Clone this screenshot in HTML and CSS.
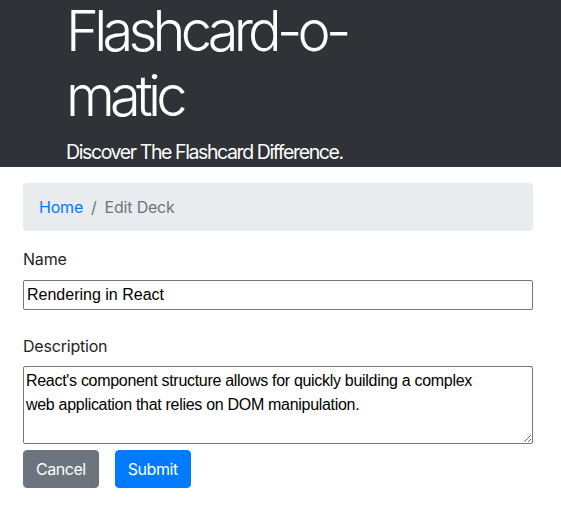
FILE: index.html
```html
<!DOCTYPE html>
<html>
<head>
<meta charset="utf-8">
<link rel="stylesheet" href="styles.css">
</head>
<body>
<header class="jumbo">
  <div class="jumbo-inner">
    <h1 class="title">Flashcard-o-matic</h1>
    <p class="lead">Discover The Flashcard Difference.</p>
  </div>
</header>
<main class="container">
  <nav class="breadcrumb">
    <a class="crumb-link" href="#">Home</a>
    <span class="crumb-sep">/</span>
    <span class="crumb-current">Edit Deck</span>
  </nav>
  <form class="deck-form">
    <div class="field">
      <label class="label" for="name">Name</label>
      <input class="input" id="name" type="text" value="Rendering in React">
    </div>
    <div class="field field-desc">
      <label class="label" for="desc">Description</label>
      <textarea class="textarea" id="desc">React's component structure allows for quickly building a complex web application that relies on DOM manipulation.</textarea>
    </div>
    <div class="actions">
      <button type="button" class="btn btn-secondary">Cancel</button>
      <button type="submit" class="btn btn-primary">Submit</button>
    </div>
  </form>
</main>
</body>
</html>
```
FILE: styles.css
```css
* { box-sizing: border-box; }
html, body {
  margin: 0;
  padding: 0;
  background: #fff;
}
body {
  font-family: Inter, "Noto Sans", sans-serif;
  font-size: 16px;
  line-height: 1.5;
  color: #212529;
}
.jumbo {
  background: #2f3337;
  color: #fff;
  height: 167px;
  overflow: hidden;
}
.jumbo-inner {
  padding: 0 0 0 66px;
}
.title {
  font-size: 56px;
  font-weight: 300;
  line-height: 65px;
  margin: -1px 0 0 0;
  width: 310px;
  letter-spacing: -4.8px;
}
.lead {
  margin: 8px 0 0 0;
  font-size: 19.5px;
  font-weight: 400;
  line-height: 30px;
  letter-spacing: -1.4px;
}
.container {
  padding: 16px 28px 0 23px;
}
.breadcrumb {
  background: #e9ecef;
  border-radius: 4px;
  padding: 12px 16px;
  display: flex;
  align-items: center;
  margin-bottom: 16px;
  height: 48px;
  letter-spacing: -0.2px;
}
.crumb-link {
  color: #007bff;
  text-decoration: none;
}
.crumb-sep {
  color: #6c757d;
  padding: 0 8px;
}
.crumb-current {
  color: #6c757d;
}
.field {
  display: flex;
  flex-direction: column;
}
.label {
  line-height: 24px;
  margin-bottom: 8px;
  letter-spacing: -0.2px;
}
.input {
  font-family: "Liberation Sans", Arial, sans-serif;
  font-size: 16px;
  height: 30px;
  padding: 1px 3px;
  border: 1px solid #767676;
  border-radius: 2px;
  color: #000;
  margin: 1px 0 0 0;
}
.field-desc {
  margin-top: 24px;
}
.textarea {
  font-family: "Liberation Sans", Arial, sans-serif;
  font-size: 16px;
  line-height: 24px;
  height: 78px;
  padding: 2px 40px 2px 2px;
  border: 1px solid #767676;
  border-radius: 2px;
  color: #000;
  margin: 0;
  resize: vertical;
  letter-spacing: -0.3px;
}
.actions {
  display: flex;
  gap: 16px;
  margin-top: 6px;
}
.btn {
  font-family: Inter, "Noto Sans", sans-serif;
  font-size: 16px;
  line-height: 24px;
  padding: 6px 12px;
  border: 1px solid transparent;
  border-radius: 4px;
  color: #fff;
  height: 38px;
  letter-spacing: -0.45px;
}
.btn-secondary {
  background: #6c757d;
  border-color: #6c757d;
}
.btn-primary {
  background: #007bff;
  border-color: #007bff;
}
```
